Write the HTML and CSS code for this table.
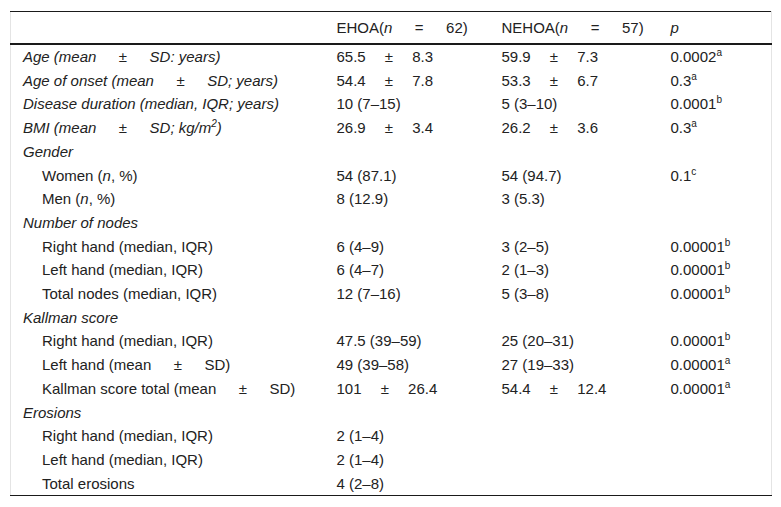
FILE: index.html
```html
<!DOCTYPE html>
<html>
<head>
<meta charset="utf-8">
<link rel="stylesheet" href="styles.css">
</head>
<body>
<div class="wrap">
<table class="data">
  <colgroup>
    <col class="c1"><col class="c2"><col class="c3"><col class="c4">
  </colgroup>
  <thead>
    <tr>
      <th></th>
      <th>EHOA(<i>n</i>&ensp;&emsp;=&ensp;&emsp;62)</th>
      <th>NEHOA(<i>n</i>&ensp;&emsp;=&ensp;&emsp;57)</th>
      <th><i>p</i></th>
    </tr>
  </thead>
  <tbody>
    <tr><td class="it">Age (mean&ensp;&emsp;±&ensp;&emsp;SD: years)</td><td>65.5 &emsp;±&emsp; 8.3</td><td>59.9 &emsp;±&emsp; 7.3</td><td>0.0002<sup>a</sup></td></tr>
    <tr><td class="it">Age of onset (mean&ensp;&emsp;±&ensp;&emsp;SD; years)</td><td>54.4 &emsp;±&emsp; 7.8</td><td>53.3 &emsp;±&emsp; 6.7</td><td>0.3<sup>a</sup></td></tr>
    <tr><td class="it">Disease duration (median, IQR; years)</td><td>10 (7–15)</td><td>5 (3–10)</td><td>0.0001<sup>b</sup></td></tr>
    <tr><td class="it">BMI (mean&ensp;&emsp;±&ensp;&emsp;SD; kg/m<sup>2</sup>)</td><td>26.9 &emsp;±&emsp; 3.4</td><td>26.2 &emsp;±&emsp; 3.6</td><td>0.3<sup>a</sup></td></tr>
    <tr><td class="it">Gender</td><td></td><td></td><td></td></tr>
    <tr><td class="sub">Women (<i>n</i>, %)</td><td>54 (87.1)</td><td>54 (94.7)</td><td>0.1<sup>c</sup></td></tr>
    <tr><td class="sub">Men (<i>n</i>, %)</td><td>8 (12.9)</td><td>3 (5.3)</td><td></td></tr>
    <tr><td class="it">Number of nodes</td><td></td><td></td><td></td></tr>
    <tr><td class="sub">Right hand (median, IQR)</td><td>6 (4–9)</td><td>3 (2–5)</td><td>0.00001<sup>b</sup></td></tr>
    <tr><td class="sub">Left hand (median, IQR)</td><td>6 (4–7)</td><td>2 (1–3)</td><td>0.00001<sup>b</sup></td></tr>
    <tr><td class="sub">Total nodes (median, IQR)</td><td>12 (7–16)</td><td>5 (3–8)</td><td>0.00001<sup>b</sup></td></tr>
    <tr><td class="it">Kallman score</td><td></td><td></td><td></td></tr>
    <tr><td class="sub">Right hand (median, IQR)</td><td>47.5 (39–59)</td><td>25 (20–31)</td><td>0.00001<sup>b</sup></td></tr>
    <tr><td class="sub">Left hand (mean&ensp;&emsp;±&ensp;&emsp;SD)</td><td>49 (39–58)</td><td>27 (19–33)</td><td>0.00001<sup>a</sup></td></tr>
    <tr><td class="sub">Kallman score total (mean&ensp;&emsp;±&ensp;&emsp;SD)</td><td>101 &emsp;±&emsp; 26.4</td><td>54.4 &emsp;±&emsp; 12.4</td><td>0.00001<sup>a</sup></td></tr>
    <tr><td class="it">Erosions</td><td></td><td></td><td></td></tr>
    <tr><td class="sub">Right hand (median, IQR)</td><td>2 (1–4)</td><td></td><td></td></tr>
    <tr><td class="sub">Left hand (median, IQR)</td><td>2 (1–4)</td><td></td><td></td></tr>
    <tr><td class="sub">Total erosions</td><td>4 (2–8)</td><td></td><td></td></tr>
  </tbody>
</table>
</div>
</body>
</html>
```
FILE: styles.css
```css
html, body {
  margin: 0;
  padding: 0;
  background: #ffffff;
}
body {
  font-family: "Liberation Sans", Arial, sans-serif;
  font-size: 15px;
  color: #222222;
}
.wrap {
  padding: 11px 0 0 10px;
}
.data {
  border-collapse: collapse;
  width: 761px;
  table-layout: fixed;
  border-left: 1px solid #e4e4e4;
  border-right: 1px solid #e4e4e4;
  border-top: 1px solid #1a1a1a;
  border-bottom: 1px solid #1a1a1a;
}
.c1 { width: 314px; }
.c2 { width: 165px; }
.c3 { width: 169px; }
.c4 { width: 113px; }
.data th {
  font-weight: normal;
  text-align: left;
  height: 31px;
  padding: 0 12px;
  line-height: 20px;
  border-bottom: 2px solid #1a1a1a;
  white-space: nowrap;
}
.data td {
  padding: 2px 12px;
  line-height: 19.7px;
  height: 19.7px;
  white-space: nowrap;
  vertical-align: middle;
}
.data td.it {
  font-style: italic;
}
.data td.sub {
  padding-left: 31px;
}
sup {
  font-size: 10px;
  line-height: 0;
  vertical-align: 6px;
}
```
